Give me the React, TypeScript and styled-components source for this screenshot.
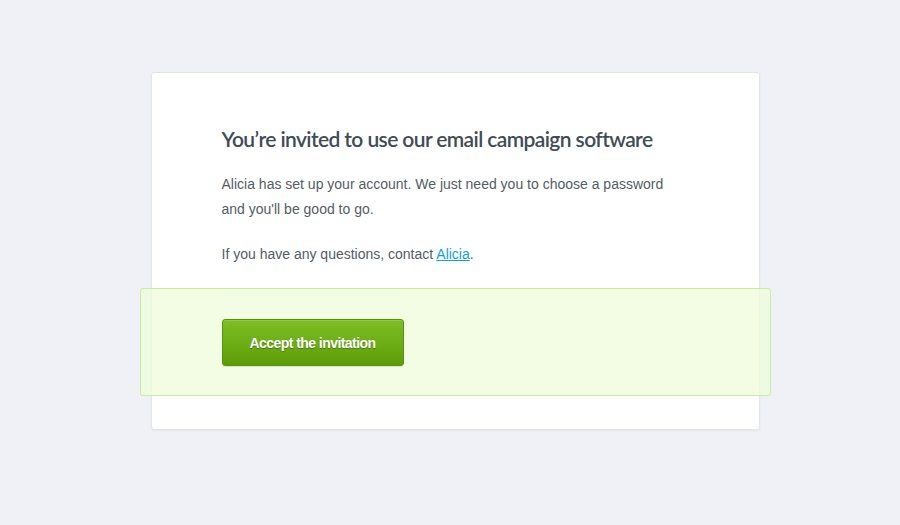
import styled, { createGlobalStyle } from "styled-components";

const GlobalStyle = createGlobalStyle`
  html, body {
    margin: 0;
    padding: 0;
    background: #f0f1f6;
  }
`;

const Page = styled.div(() => ({
  width: 900,
  height: 525,
  display: "flex",
  justifyContent: "center",
  padding: "72px 0 0 10px",
  boxSizing: "border-box",
}));

const Card = styled.div(() => ({
  width: 609,
  boxSizing: "border-box",
  backgroundColor: "#ffffff",
  border: "1px solid #e3e5ea",
  borderRadius: 3,
  boxShadow: "0 1px 2px rgba(40, 50, 70, 0.06)",
  padding: "51px 0 33px",
  alignSelf: "flex-start",
}));

const Body = styled.div(() => ({
  padding: "0 70px",
}));

const Heading = styled.h1(() => ({
  margin: "0 0 18px",
  fontFamily: "Lato, 'Open Sans', sans-serif",
  fontWeight: 600,
  fontSize: 21,
  lineHeight: "30px",
  color: "#404c55",
  letterSpacing: -0.6,
}));

const Paragraph = styled.p<{ $last?: boolean }>((p) => ({
  margin: p.$last ? 0 : "0 0 20px",
  fontFamily: "'Liberation Sans', Arial, sans-serif",
  fontSize: 14,
  lineHeight: "25px",
  color: "#535d65",
  maxWidth: 450,
}));

const Link = styled.a(() => ({
  color: "#10a2d6",
  textDecoration: "underline",
}));

const ActionBand = styled.div(() => ({
  margin: "21px -12px 0",
  padding: "30px 81px 29px",
  backgroundColor: "rgba(238, 252, 218, 0.75)",
  border: "1px solid #c6ee9c",
  borderRadius: 3,
}));

const AcceptButton = styled.button(() => ({
  width: 182,
  height: 47,
  border: "1px solid #569412",
  borderRadius: 3,
  background: "linear-gradient(to bottom, #7fbf25 0%, #5c9c06 100%)",
  boxShadow: "inset 0 1px 0 rgba(255,255,255,0.15), 0 1px 1px rgba(0,0,0,0.1)",
  color: "#ffffff",
  fontFamily: "'Liberation Sans', Arial, sans-serif",
  fontWeight: 700,
  fontSize: 14,
  letterSpacing: -0.55,
  textShadow: "0 1px 1px rgba(0,0,0,0.3)",
  cursor: "pointer",
  padding: 0,
}));

const App = () => {
  return (
    <>
      <GlobalStyle />
      <Page>
        <Card>
          <Body>
            <Heading>You’re invited to use our email campaign software</Heading>
            <Paragraph>
              Alicia has set up your account. We just need you to choose a
              password and you'll be good to go.
            </Paragraph>
            <Paragraph $last>
              If you have any questions, contact <Link href="#">Alicia</Link>.
            </Paragraph>
          </Body>
          <ActionBand>
            <AcceptButton>Accept the invitation</AcceptButton>
          </ActionBand>
        </Card>
      </Page>
    </>
  );
};

export default App;
